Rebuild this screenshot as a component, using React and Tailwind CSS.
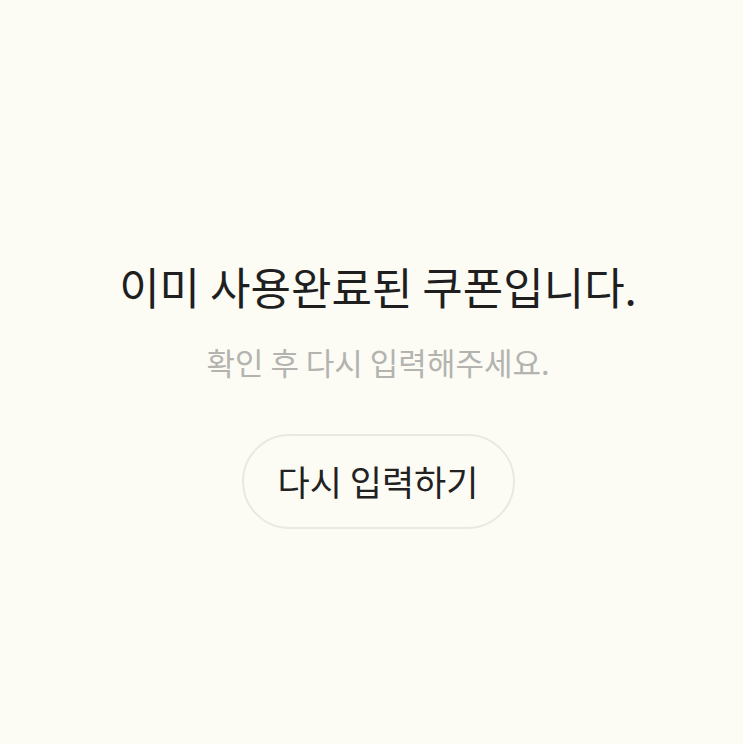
export default function App() {
  return (
    <div
      className="min-h-screen w-full bg-[#fcfcf5] flex flex-col items-center pt-[258px] pl-[13px]"
      style={{ fontFamily: '"Noto Sans CJK KR", "Noto Sans", sans-serif' }}
    >
      <h1 className="text-[44px] leading-[56px] text-[#1f1f1f] font-normal">
        이미 사용완료된 쿠폰입니다.
      </h1>
      <p className="mt-[28px] text-[31px] leading-[40px] text-[#b3b3b0]">
        확인 후 다시 입력해주세요.
      </p>
      <button className="mt-[52px] w-[273px] h-[95px] rounded-full border-2 border-[#e9e9e3] bg-[#fcfcf5] text-[35px] text-[#222222] flex items-center justify-center">
        다시 입력하기
      </button>
    </div>
  )
}
